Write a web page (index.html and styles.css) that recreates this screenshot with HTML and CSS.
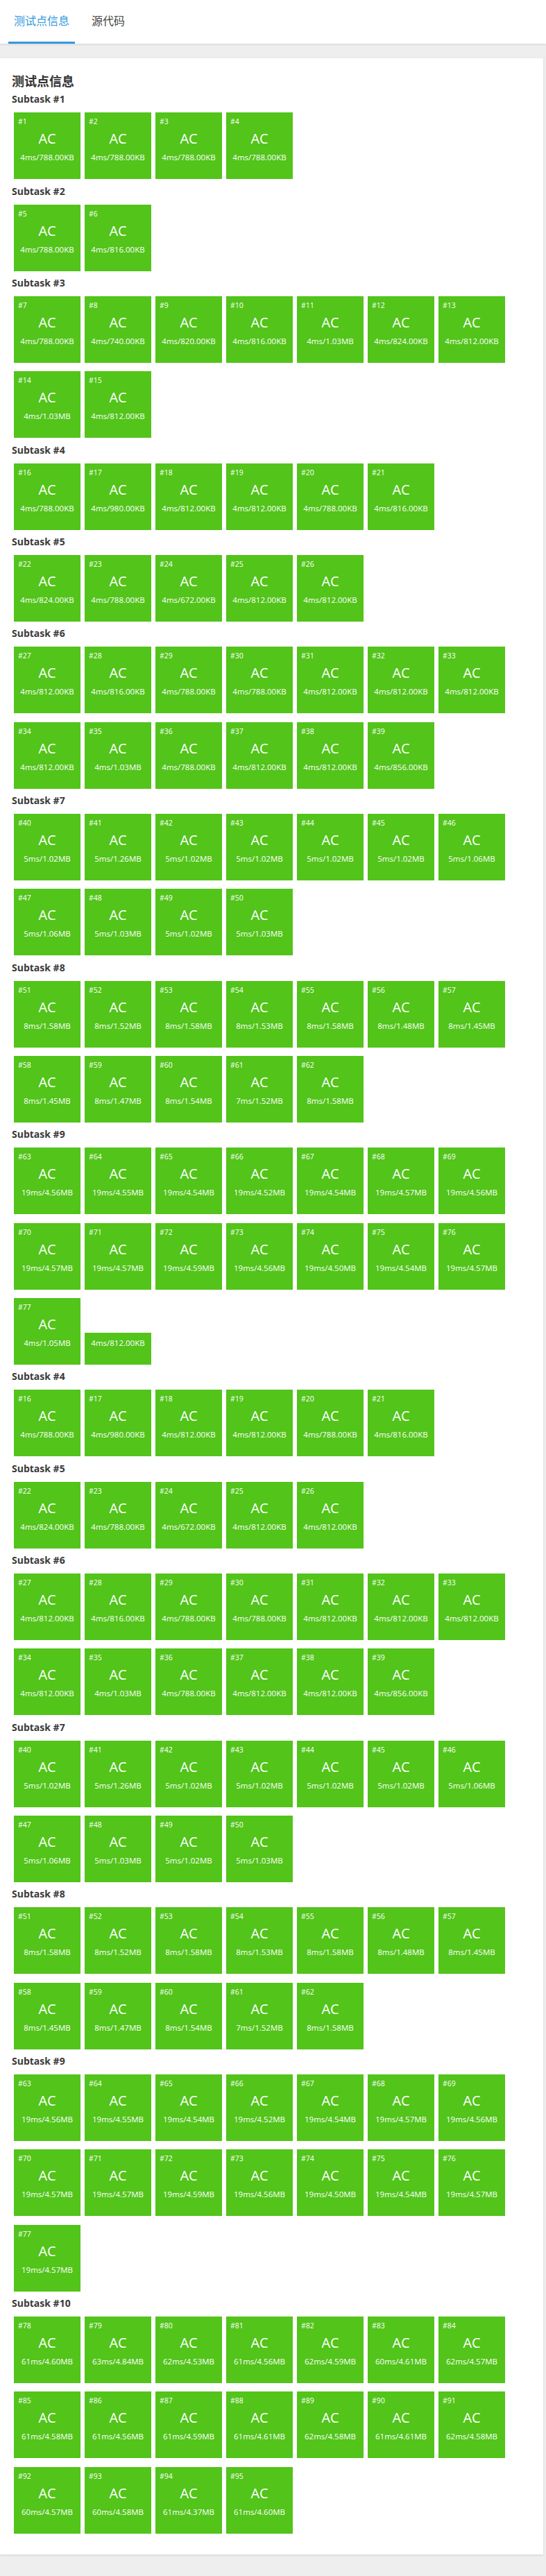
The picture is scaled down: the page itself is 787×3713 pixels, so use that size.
FILE: index.html
```html
<!DOCTYPE html>
<html lang="zh-CN">
<head>
<meta charset="utf-8">
<title>测试点信息</title>
<link rel="stylesheet" href="styles.css">
</head>
<body>
<div class="header">
  <div class="tab active">测试点信息</div>
  <div class="tab">源代码</div>
</div>
<div class="card">
  <h2 class="title">测试点信息</h2>

  <h3 class="sub">Subtask #1</h3>
  <div class="tiles">
    <div class="tile"><div class="num">#1</div><div class="st">AC</div><div class="info">4ms/788.00KB</div></div>
    <div class="tile"><div class="num">#2</div><div class="st">AC</div><div class="info">4ms/788.00KB</div></div>
    <div class="tile"><div class="num">#3</div><div class="st">AC</div><div class="info">4ms/788.00KB</div></div>
    <div class="tile"><div class="num">#4</div><div class="st">AC</div><div class="info">4ms/788.00KB</div></div>
  </div>

  <h3 class="sub">Subtask #2</h3>
  <div class="tiles">
    <div class="tile"><div class="num">#5</div><div class="st">AC</div><div class="info">4ms/788.00KB</div></div>
    <div class="tile"><div class="num">#6</div><div class="st">AC</div><div class="info">4ms/816.00KB</div></div>
  </div>

  <h3 class="sub">Subtask #3</h3>
  <div class="tiles">
    <div class="tile"><div class="num">#7</div><div class="st">AC</div><div class="info">4ms/788.00KB</div></div>
    <div class="tile"><div class="num">#8</div><div class="st">AC</div><div class="info">4ms/740.00KB</div></div>
    <div class="tile"><div class="num">#9</div><div class="st">AC</div><div class="info">4ms/820.00KB</div></div>
    <div class="tile"><div class="num">#10</div><div class="st">AC</div><div class="info">4ms/816.00KB</div></div>
    <div class="tile"><div class="num">#11</div><div class="st">AC</div><div class="info">4ms/1.03MB</div></div>
    <div class="tile"><div class="num">#12</div><div class="st">AC</div><div class="info">4ms/824.00KB</div></div>
    <div class="tile"><div class="num">#13</div><div class="st">AC</div><div class="info">4ms/812.00KB</div></div>
    <div class="tile"><div class="num">#14</div><div class="st">AC</div><div class="info">4ms/1.03MB</div></div>
    <div class="tile"><div class="num">#15</div><div class="st">AC</div><div class="info">4ms/812.00KB</div></div>
  </div>

  <h3 class="sub">Subtask #4</h3>
  <div class="tiles">
    <div class="tile"><div class="num">#16</div><div class="st">AC</div><div class="info">4ms/788.00KB</div></div>
    <div class="tile"><div class="num">#17</div><div class="st">AC</div><div class="info">4ms/980.00KB</div></div>
    <div class="tile"><div class="num">#18</div><div class="st">AC</div><div class="info">4ms/812.00KB</div></div>
    <div class="tile"><div class="num">#19</div><div class="st">AC</div><div class="info">4ms/812.00KB</div></div>
    <div class="tile"><div class="num">#20</div><div class="st">AC</div><div class="info">4ms/788.00KB</div></div>
    <div class="tile"><div class="num">#21</div><div class="st">AC</div><div class="info">4ms/816.00KB</div></div>
  </div>

  <h3 class="sub">Subtask #5</h3>
  <div class="tiles">
    <div class="tile"><div class="num">#22</div><div class="st">AC</div><div class="info">4ms/824.00KB</div></div>
    <div class="tile"><div class="num">#23</div><div class="st">AC</div><div class="info">4ms/788.00KB</div></div>
    <div class="tile"><div class="num">#24</div><div class="st">AC</div><div class="info">4ms/672.00KB</div></div>
    <div class="tile"><div class="num">#25</div><div class="st">AC</div><div class="info">4ms/812.00KB</div></div>
    <div class="tile"><div class="num">#26</div><div class="st">AC</div><div class="info">4ms/812.00KB</div></div>
  </div>

  <h3 class="sub">Subtask #6</h3>
  <div class="tiles">
    <div class="tile"><div class="num">#27</div><div class="st">AC</div><div class="info">4ms/812.00KB</div></div>
    <div class="tile"><div class="num">#28</div><div class="st">AC</div><div class="info">4ms/816.00KB</div></div>
    <div class="tile"><div class="num">#29</div><div class="st">AC</div><div class="info">4ms/788.00KB</div></div>
    <div class="tile"><div class="num">#30</div><div class="st">AC</div><div class="info">4ms/788.00KB</div></div>
    <div class="tile"><div class="num">#31</div><div class="st">AC</div><div class="info">4ms/812.00KB</div></div>
    <div class="tile"><div class="num">#32</div><div class="st">AC</div><div class="info">4ms/812.00KB</div></div>
    <div class="tile"><div class="num">#33</div><div class="st">AC</div><div class="info">4ms/812.00KB</div></div>
    <div class="tile"><div class="num">#34</div><div class="st">AC</div><div class="info">4ms/812.00KB</div></div>
    <div class="tile"><div class="num">#35</div><div class="st">AC</div><div class="info">4ms/1.03MB</div></div>
    <div class="tile"><div class="num">#36</div><div class="st">AC</div><div class="info">4ms/788.00KB</div></div>
    <div class="tile"><div class="num">#37</div><div class="st">AC</div><div class="info">4ms/812.00KB</div></div>
    <div class="tile"><div class="num">#38</div><div class="st">AC</div><div class="info">4ms/812.00KB</div></div>
    <div class="tile"><div class="num">#39</div><div class="st">AC</div><div class="info">4ms/856.00KB</div></div>
  </div>

  <h3 class="sub">Subtask #7</h3>
  <div class="tiles">
    <div class="tile"><div class="num">#40</div><div class="st">AC</div><div class="info">5ms/1.02MB</div></div>
    <div class="tile"><div class="num">#41</div><div class="st">AC</div><div class="info">5ms/1.26MB</div></div>
    <div class="tile"><div class="num">#42</div><div class="st">AC</div><div class="info">5ms/1.02MB</div></div>
    <div class="tile"><div class="num">#43</div><div class="st">AC</div><div class="info">5ms/1.02MB</div></div>
    <div class="tile"><div class="num">#44</div><div class="st">AC</div><div class="info">5ms/1.02MB</div></div>
    <div class="tile"><div class="num">#45</div><div class="st">AC</div><div class="info">5ms/1.02MB</div></div>
    <div class="tile"><div class="num">#46</div><div class="st">AC</div><div class="info">5ms/1.06MB</div></div>
    <div class="tile"><div class="num">#47</div><div class="st">AC</div><div class="info">5ms/1.06MB</div></div>
    <div class="tile"><div class="num">#48</div><div class="st">AC</div><div class="info">5ms/1.03MB</div></div>
    <div class="tile"><div class="num">#49</div><div class="st">AC</div><div class="info">5ms/1.02MB</div></div>
    <div class="tile"><div class="num">#50</div><div class="st">AC</div><div class="info">5ms/1.03MB</div></div>
  </div>

  <h3 class="sub">Subtask #8</h3>
  <div class="tiles">
    <div class="tile"><div class="num">#51</div><div class="st">AC</div><div class="info">8ms/1.58MB</div></div>
    <div class="tile"><div class="num">#52</div><div class="st">AC</div><div class="info">8ms/1.52MB</div></div>
    <div class="tile"><div class="num">#53</div><div class="st">AC</div><div class="info">8ms/1.58MB</div></div>
    <div class="tile"><div class="num">#54</div><div class="st">AC</div><div class="info">8ms/1.53MB</div></div>
    <div class="tile"><div class="num">#55</div><div class="st">AC</div><div class="info">8ms/1.58MB</div></div>
    <div class="tile"><div class="num">#56</div><div class="st">AC</div><div class="info">8ms/1.48MB</div></div>
    <div class="tile"><div class="num">#57</div><div class="st">AC</div><div class="info">8ms/1.45MB</div></div>
    <div class="tile"><div class="num">#58</div><div class="st">AC</div><div class="info">8ms/1.45MB</div></div>
    <div class="tile"><div class="num">#59</div><div class="st">AC</div><div class="info">8ms/1.47MB</div></div>
    <div class="tile"><div class="num">#60</div><div class="st">AC</div><div class="info">8ms/1.54MB</div></div>
    <div class="tile"><div class="num">#61</div><div class="st">AC</div><div class="info">7ms/1.52MB</div></div>
    <div class="tile"><div class="num">#62</div><div class="st">AC</div><div class="info">8ms/1.58MB</div></div>
  </div>

  <h3 class="sub">Subtask #9</h3>
  <div class="tiles">
    <div class="tile"><div class="num">#63</div><div class="st">AC</div><div class="info">19ms/4.56MB</div></div>
    <div class="tile"><div class="num">#64</div><div class="st">AC</div><div class="info">19ms/4.55MB</div></div>
    <div class="tile"><div class="num">#65</div><div class="st">AC</div><div class="info">19ms/4.54MB</div></div>
    <div class="tile"><div class="num">#66</div><div class="st">AC</div><div class="info">19ms/4.52MB</div></div>
    <div class="tile"><div class="num">#67</div><div class="st">AC</div><div class="info">19ms/4.54MB</div></div>
    <div class="tile"><div class="num">#68</div><div class="st">AC</div><div class="info">19ms/4.57MB</div></div>
    <div class="tile"><div class="num">#69</div><div class="st">AC</div><div class="info">19ms/4.56MB</div></div>
    <div class="tile"><div class="num">#70</div><div class="st">AC</div><div class="info">19ms/4.57MB</div></div>
    <div class="tile"><div class="num">#71</div><div class="st">AC</div><div class="info">19ms/4.57MB</div></div>
    <div class="tile"><div class="num">#72</div><div class="st">AC</div><div class="info">19ms/4.59MB</div></div>
    <div class="tile"><div class="num">#73</div><div class="st">AC</div><div class="info">19ms/4.56MB</div></div>
    <div class="tile"><div class="num">#74</div><div class="st">AC</div><div class="info">19ms/4.50MB</div></div>
    <div class="tile"><div class="num">#75</div><div class="st">AC</div><div class="info">19ms/4.54MB</div></div>
    <div class="tile"><div class="num">#76</div><div class="st">AC</div><div class="info">19ms/4.57MB</div></div>
    <div class="tile"><div class="num">#77</div><div class="st">AC</div><div class="info">4ms/1.05MB</div></div>
    <div class="tile"><div class="info">4ms/812.00KB</div></div>
  </div>

  <h3 class="sub">Subtask #4</h3>
  <div class="tiles">
    <div class="tile"><div class="num">#16</div><div class="st">AC</div><div class="info">4ms/788.00KB</div></div>
    <div class="tile"><div class="num">#17</div><div class="st">AC</div><div class="info">4ms/980.00KB</div></div>
    <div class="tile"><div class="num">#18</div><div class="st">AC</div><div class="info">4ms/812.00KB</div></div>
    <div class="tile"><div class="num">#19</div><div class="st">AC</div><div class="info">4ms/812.00KB</div></div>
    <div class="tile"><div class="num">#20</div><div class="st">AC</div><div class="info">4ms/788.00KB</div></div>
    <div class="tile"><div class="num">#21</div><div class="st">AC</div><div class="info">4ms/816.00KB</div></div>
  </div>

  <h3 class="sub">Subtask #5</h3>
  <div class="tiles">
    <div class="tile"><div class="num">#22</div><div class="st">AC</div><div class="info">4ms/824.00KB</div></div>
    <div class="tile"><div class="num">#23</div><div class="st">AC</div><div class="info">4ms/788.00KB</div></div>
    <div class="tile"><div class="num">#24</div><div class="st">AC</div><div class="info">4ms/672.00KB</div></div>
    <div class="tile"><div class="num">#25</div><div class="st">AC</div><div class="info">4ms/812.00KB</div></div>
    <div class="tile"><div class="num">#26</div><div class="st">AC</div><div class="info">4ms/812.00KB</div></div>
  </div>

  <h3 class="sub">Subtask #6</h3>
  <div class="tiles">
    <div class="tile"><div class="num">#27</div><div class="st">AC</div><div class="info">4ms/812.00KB</div></div>
    <div class="tile"><div class="num">#28</div><div class="st">AC</div><div class="info">4ms/816.00KB</div></div>
    <div class="tile"><div class="num">#29</div><div class="st">AC</div><div class="info">4ms/788.00KB</div></div>
    <div class="tile"><div class="num">#30</div><div class="st">AC</div><div class="info">4ms/788.00KB</div></div>
    <div class="tile"><div class="num">#31</div><div class="st">AC</div><div class="info">4ms/812.00KB</div></div>
    <div class="tile"><div class="num">#32</div><div class="st">AC</div><div class="info">4ms/812.00KB</div></div>
    <div class="tile"><div class="num">#33</div><div class="st">AC</div><div class="info">4ms/812.00KB</div></div>
    <div class="tile"><div class="num">#34</div><div class="st">AC</div><div class="info">4ms/812.00KB</div></div>
    <div class="tile"><div class="num">#35</div><div class="st">AC</div><div class="info">4ms/1.03MB</div></div>
    <div class="tile"><div class="num">#36</div><div class="st">AC</div><div class="info">4ms/788.00KB</div></div>
    <div class="tile"><div class="num">#37</div><div class="st">AC</div><div class="info">4ms/812.00KB</div></div>
    <div class="tile"><div class="num">#38</div><div class="st">AC</div><div class="info">4ms/812.00KB</div></div>
    <div class="tile"><div class="num">#39</div><div class="st">AC</div><div class="info">4ms/856.00KB</div></div>
  </div>

  <h3 class="sub">Subtask #7</h3>
  <div class="tiles">
    <div class="tile"><div class="num">#40</div><div class="st">AC</div><div class="info">5ms/1.02MB</div></div>
    <div class="tile"><div class="num">#41</div><div class="st">AC</div><div class="info">5ms/1.26MB</div></div>
    <div class="tile"><div class="num">#42</div><div class="st">AC</div><div class="info">5ms/1.02MB</div></div>
    <div class="tile"><div class="num">#43</div><div class="st">AC</div><div class="info">5ms/1.02MB</div></div>
    <div class="tile"><div class="num">#44</div><div class="st">AC</div><div class="info">5ms/1.02MB</div></div>
    <div class="tile"><div class="num">#45</div><div class="st">AC</div><div class="info">5ms/1.02MB</div></div>
    <div class="tile"><div class="num">#46</div><div class="st">AC</div><div class="info">5ms/1.06MB</div></div>
    <div class="tile"><div class="num">#47</div><div class="st">AC</div><div class="info">5ms/1.06MB</div></div>
    <div class="tile"><div class="num">#48</div><div class="st">AC</div><div class="info">5ms/1.03MB</div></div>
    <div class="tile"><div class="num">#49</div><div class="st">AC</div><div class="info">5ms/1.02MB</div></div>
    <div class="tile"><div class="num">#50</div><div class="st">AC</div><div class="info">5ms/1.03MB</div></div>
  </div>

  <h3 class="sub">Subtask #8</h3>
  <div class="tiles">
    <div class="tile"><div class="num">#51</div><div class="st">AC</div><div class="info">8ms/1.58MB</div></div>
    <div class="tile"><div class="num">#52</div><div class="st">AC</div><div class="info">8ms/1.52MB</div></div>
    <div class="tile"><div class="num">#53</div><div class="st">AC</div><div class="info">8ms/1.58MB</div></div>
    <div class="tile"><div class="num">#54</div><div class="st">AC</div><div class="info">8ms/1.53MB</div></div>
    <div class="tile"><div class="num">#55</div><div class="st">AC</div><div class="info">8ms/1.58MB</div></div>
    <div class="tile"><div class="num">#56</div><div class="st">AC</div><div class="info">8ms/1.48MB</div></div>
    <div class="tile"><div class="num">#57</div><div class="st">AC</div><div class="info">8ms/1.45MB</div></div>
    <div class="tile"><div class="num">#58</div><div class="st">AC</div><div class="info">8ms/1.45MB</div></div>
    <div class="tile"><div class="num">#59</div><div class="st">AC</div><div class="info">8ms/1.47MB</div></div>
    <div class="tile"><div class="num">#60</div><div class="st">AC</div><div class="info">8ms/1.54MB</div></div>
    <div class="tile"><div class="num">#61</div><div class="st">AC</div><div class="info">7ms/1.52MB</div></div>
    <div class="tile"><div class="num">#62</div><div class="st">AC</div><div class="info">8ms/1.58MB</div></div>
  </div>

  <h3 class="sub">Subtask #9</h3>
  <div class="tiles">
    <div class="tile"><div class="num">#63</div><div class="st">AC</div><div class="info">19ms/4.56MB</div></div>
    <div class="tile"><div class="num">#64</div><div class="st">AC</div><div class="info">19ms/4.55MB</div></div>
    <div class="tile"><div class="num">#65</div><div class="st">AC</div><div class="info">19ms/4.54MB</div></div>
    <div class="tile"><div class="num">#66</div><div class="st">AC</div><div class="info">19ms/4.52MB</div></div>
    <div class="tile"><div class="num">#67</div><div class="st">AC</div><div class="info">19ms/4.54MB</div></div>
    <div class="tile"><div class="num">#68</div><div class="st">AC</div><div class="info">19ms/4.57MB</div></div>
    <div class="tile"><div class="num">#69</div><div class="st">AC</div><div class="info">19ms/4.56MB</div></div>
    <div class="tile"><div class="num">#70</div><div class="st">AC</div><div class="info">19ms/4.57MB</div></div>
    <div class="tile"><div class="num">#71</div><div class="st">AC</div><div class="info">19ms/4.57MB</div></div>
    <div class="tile"><div class="num">#72</div><div class="st">AC</div><div class="info">19ms/4.59MB</div></div>
    <div class="tile"><div class="num">#73</div><div class="st">AC</div><div class="info">19ms/4.56MB</div></div>
    <div class="tile"><div class="num">#74</div><div class="st">AC</div><div class="info">19ms/4.50MB</div></div>
    <div class="tile"><div class="num">#75</div><div class="st">AC</div><div class="info">19ms/4.54MB</div></div>
    <div class="tile"><div class="num">#76</div><div class="st">AC</div><div class="info">19ms/4.57MB</div></div>
    <div class="tile"><div class="num">#77</div><div class="st">AC</div><div class="info">19ms/4.57MB</div></div>
  </div>

  <h3 class="sub">Subtask #10</h3>
  <div class="tiles">
    <div class="tile"><div class="num">#78</div><div class="st">AC</div><div class="info">61ms/4.60MB</div></div>
    <div class="tile"><div class="num">#79</div><div class="st">AC</div><div class="info">63ms/4.84MB</div></div>
    <div class="tile"><div class="num">#80</div><div class="st">AC</div><div class="info">62ms/4.53MB</div></div>
    <div class="tile"><div class="num">#81</div><div class="st">AC</div><div class="info">61ms/4.56MB</div></div>
    <div class="tile"><div class="num">#82</div><div class="st">AC</div><div class="info">62ms/4.59MB</div></div>
    <div class="tile"><div class="num">#83</div><div class="st">AC</div><div class="info">60ms/4.61MB</div></div>
    <div class="tile"><div class="num">#84</div><div class="st">AC</div><div class="info">62ms/4.57MB</div></div>
    <div class="tile"><div class="num">#85</div><div class="st">AC</div><div class="info">61ms/4.58MB</div></div>
    <div class="tile"><div class="num">#86</div><div class="st">AC</div><div class="info">61ms/4.56MB</div></div>
    <div class="tile"><div class="num">#87</div><div class="st">AC</div><div class="info">61ms/4.59MB</div></div>
    <div class="tile"><div class="num">#88</div><div class="st">AC</div><div class="info">61ms/4.61MB</div></div>
    <div class="tile"><div class="num">#89</div><div class="st">AC</div><div class="info">62ms/4.58MB</div></div>
    <div class="tile"><div class="num">#90</div><div class="st">AC</div><div class="info">61ms/4.61MB</div></div>
    <div class="tile"><div class="num">#91</div><div class="st">AC</div><div class="info">62ms/4.58MB</div></div>
    <div class="tile"><div class="num">#92</div><div class="st">AC</div><div class="info">60ms/4.57MB</div></div>
    <div class="tile"><div class="num">#93</div><div class="st">AC</div><div class="info">60ms/4.58MB</div></div>
    <div class="tile"><div class="num">#94</div><div class="st">AC</div><div class="info">61ms/4.37MB</div></div>
    <div class="tile"><div class="num">#95</div><div class="st">AC</div><div class="info">61ms/4.60MB</div></div>
  </div>
</div>
</body>
</html>
```
FILE: styles.css
```css
html, body {
  margin: 0;
  padding: 0;
}
body {
  background: #eeeeee;
  font-family: "Open Sans", "Noto Sans CJK SC", sans-serif;
  color: #333;
}
.header {
  position: relative;
  z-index: 1;
  display: flex;
  gap: 16px;
  height: 63px;
  padding-left: 12px;
  background: #fff;
  box-shadow: 0 1px 3px rgba(0, 0, 0, 0.12);
}
.tab {
  padding: 0 8px;
  font-size: 16px;
  line-height: 60px;
  border-bottom: 3px solid transparent;
  color: #444;
}
.tab.active {
  color: #3498db;
  border-bottom-color: #3498db;
}
.card {
  margin: 21px 4px 32px 0;
  padding: 24px 17px 30px;
  background: #fff;
  box-shadow: 0 1px 3px rgba(0, 0, 0, 0.12);
}
.title {
  margin: 0;
  font-size: 18px;
  line-height: 18px;
  font-weight: 700;
  color: #333;
}
.sub {
  margin: 7.33px 0 9px;
  font-size: 14px;
  line-height: 20px;
  font-weight: 700;
  color: #3a3a3a;
}
.tiles {
  display: flex;
  flex-wrap: wrap;
  align-items: flex-end;
  column-gap: 6px;
  row-gap: 12.33px;
  margin-left: 3px;
}
.tile {
  box-sizing: border-box;
  width: 96px;
  padding: 5px 0 21px;
  background: #52c41a;
  color: #fff;
  text-align: center;
}
.num {
  padding-left: 6px;
  text-align: left;
  font-size: 10.5px;
  line-height: 16px;
}
.st {
  font-size: 20px;
  line-height: 34px;
}
.info {
  font-size: 11.5px;
  line-height: 20px;
}
```
